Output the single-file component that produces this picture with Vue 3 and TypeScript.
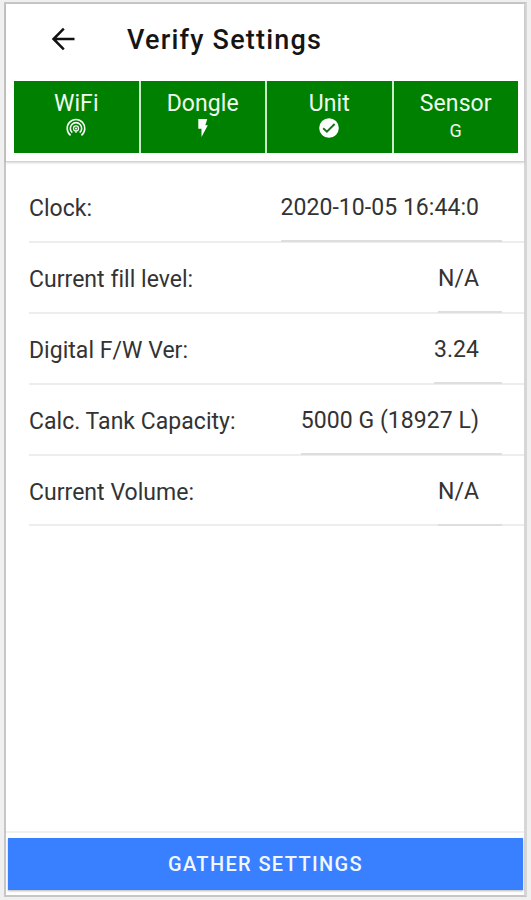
<script setup lang="ts">
interface Reading {
  label: string
  value: string
}

const tabs = ['WiFi', 'Dongle', 'Unit', 'Sensor']

const readings: Reading[] = [
  { label: 'Clock:', value: '2020-10-05 16:44:0' },
  { label: 'Current fill level:', value: 'N/A' },
  { label: 'Digital F/W Ver:', value: '3.24' },
  { label: 'Calc. Tank Capacity:', value: '5000 G (18927 L)' },
  { label: 'Current Volume:', value: 'N/A' },
]
</script>

<template>
  <div class="page">
    <main class="phone">
      <header class="header">
        <div class="toolbar">
          <button class="back" aria-label="Back">
            <svg viewBox="0 0 24 24" width="24" height="24" fill="none" stroke="#111" stroke-width="2.5">
              <path d="M23.500 12H3M12.800 1.700L2.500 12l10.300 10.300" />
            </svg>
          </button>
          <h1 class="title">Verify Settings</h1>
        </div>
        <div class="tabs">
          <div v-for="tab in tabs" :key="tab" class="tab">
            <span class="tab-name">{{ tab }}</span>
            <span class="tab-state">
              <svg v-if="tab === 'WiFi'" viewBox="0 0 20 20" width="20" height="20" fill="none" stroke="#f2fbf2" stroke-width="1.6">
                <path d="M4.600 17.300A8.800 8.800 0 1 1 15.400 17.300" />
                <path d="M6.300 14.700A5.700 5.700 0 1 1 13.700 14.700" />
                <circle cx="10" cy="10.400" r="2.500" stroke-width="1.300" />
                <circle cx="10" cy="10.400" r="1" fill="#fff" stroke="none" />
                <path d="M10 12.500v2.500" stroke-width="1.200" />
              </svg>
              <svg v-else-if="tab === 'Dongle'" viewBox="0 0 20 20" width="20" height="20" fill="#fff">
                <path d="M5.300 1h9l-2 6.300h2.500L8.500 19v-8.300H5.300z" />
              </svg>
              <svg v-else-if="tab === 'Unit'" viewBox="0 0 20 20" width="20" height="20">
                <circle cx="10" cy="10" r="9.800" fill="#fff" />
                <path d="M4.200 10.200l3.700 3.500 7.700-7.700" fill="none" stroke="#1b701b" stroke-width="1.900" />
              </svg>
              <span v-else class="tab-letter">G</span>
            </span>
          </div>
        </div>
      </header>

      <section class="list">
        <div v-for="r in readings" :key="r.label" class="row">
          <span class="label">{{ r.label }}</span>
          <span class="value">{{ r.value }}</span>
        </div>
      </section>

      <footer class="footer">
        <button class="gather">GATHER SETTINGS</button>
      </footer>
    </main>
  </div>
</template>

<style>
body {
  margin: 0;
  background: #f0f0f0;
}
</style>

<style scoped>
.page {
  box-sizing: border-box;
  height: 900px;
  padding: 2px 4px 3px 4px;
  background: #f0f0f0;
  font-family: Roboto, 'Liberation Sans', sans-serif;
}
.phone {
  box-sizing: border-box;
  width: 523px;
  height: 895px;
  display: flex;
  flex-direction: column;
  background: #fff;
  border: 2px solid #c6c6c6;
  border-right: 3px solid #d6d6d6;
}
.header {
  box-sizing: border-box;
  height: 158px;
  flex: none;
  border-bottom: 1px solid #d2d2d2;
  box-shadow: 0 1px 2px rgba(0, 0, 0, 0.16);
}
.toolbar {
  display: flex;
  align-items: center;
  height: 77px;
  padding-left: 45px;
  box-sizing: border-box;
}
.back {
  display: flex;
  padding: 0;
  margin-top: -8px;
  border: 0;
  background: none;
}
.title {
  margin: -5px 0 0 52px;
  font-size: 27px;
  font-weight: 500;
  line-height: 32px;
  letter-spacing: 1.200px;
  color: #151515;
  white-space: nowrap;
}
.tabs {
  display: grid;
  grid-template-columns: repeat(4, 1fr);
  gap: 2px;
  height: 72px;
  margin: 0 6px 0 8px;
  background: #c8ecc8;
}
.tab {
  display: flex;
  flex-direction: column;
  align-items: center;
  background: #008000;
  color: #effbef;
}
.tab-name {
  margin-top: 9px;
  font-size: 23px;
  line-height: 28px;
  letter-spacing: 0.1px;
}
.tab-state {
  display: flex;
  align-items: center;
  justify-content: center;
  height: 20px;
}
.tab-letter {
  padding-top: 5px;
  font-size: 18px;
  line-height: 20px;
}
.list {
  flex: 1;
  padding: 10px 0 0 23px;
}
.row {
  box-sizing: border-box;
  height: 70.900px;
  display: flex;
  justify-content: space-between;
  border-bottom: 2px solid #ededed;
  color: #333;
  font-size: 23px;
  line-height: 28px;
  white-space: nowrap;
}
.label {
  padding-top: 23px;
  letter-spacing: 0.030px;
}
.value {
  box-sizing: border-box;
  height: 70px;
  margin-right: 22px;
  padding: 22px 23px 0 0;
  border-bottom: 2px solid #dedede;
  letter-spacing: 0.050px;
}
.footer {
  flex: none;
  padding: 5px 1px 5px 2px;
  border-top: 2px solid #f0f0f0;
}
.gather {
  display: block;
  width: 100%;
  height: 52px;
  padding: 0;
  border: 0;
  background: #3880ff;
  box-shadow: 0 1px 2px rgba(0, 0, 0, 0.3);
  color: #f2f7ff;
  font-family: inherit;
  font-size: 20px;
  font-weight: 500;
  letter-spacing: 1.360px;
}
</style>
